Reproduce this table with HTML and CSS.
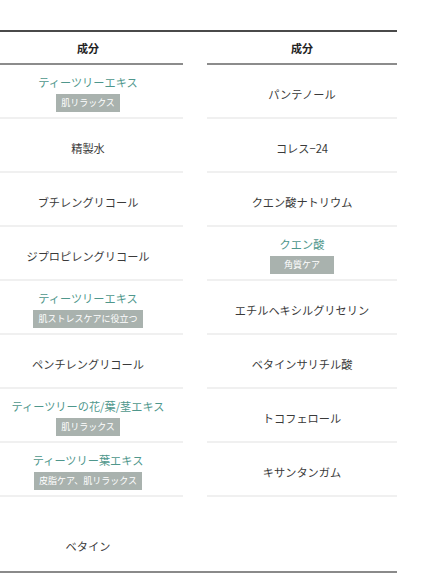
FILE: index.html
```html
<!DOCTYPE html>
<html lang="ja">
<head>
<meta charset="utf-8">
<link rel="stylesheet" href="styles.css">
</head>
<body>
<div class="compare">
  <div class="col">
    <div class="head">成分</div>
    <div class="row"><span class="name hl">ティーツリーエキス</span><span class="tag">肌リラックス</span></div>
    <div class="row single"><span class="name">精製水</span></div>
    <div class="row single"><span class="name">ブチレングリコール</span></div>
    <div class="row single"><span class="name">ジプロピレングリコール</span></div>
    <div class="row"><span class="name hl">ティーツリーエキス</span><span class="tag">肌ストレスケアに役立つ</span></div>
    <div class="row single"><span class="name">ペンチレングリコール</span></div>
    <div class="row"><span class="name hl">ティーツリーの花/葉/茎エキス</span><span class="tag">肌リラックス</span></div>
    <div class="row"><span class="name hl">ティーツリー葉エキス</span><span class="tag">皮脂ケア、肌リラックス</span></div>
    <div class="row last"><span class="name">ベタイン</span></div>
  </div>
  <div class="col">
    <div class="head">成分</div>
    <div class="row single"><span class="name">パンテノール</span></div>
    <div class="row single"><span class="name">コレス−24</span></div>
    <div class="row single"><span class="name">クエン酸ナトリウム</span></div>
    <div class="row"><span class="name hl">クエン酸</span><span class="tag">角質ケア</span></div>
    <div class="row single"><span class="name">エチルヘキシルグリセリン</span></div>
    <div class="row single"><span class="name">ベタインサリチル酸</span></div>
    <div class="row single"><span class="name">トコフェロール</span></div>
    <div class="row single"><span class="name">キサンタンガム</span></div>
    <div class="row last"></div>
  </div>
</div>
</body>
</html>
```

FILE: styles.css
```css
* { box-sizing: border-box; }
html, body { margin: 0; padding: 0; background: #fff; }
body {
  padding-top: 30px;
  font-family: "Noto Sans CJK JP", "Noto Sans", sans-serif;
  color: #333;
  overflow: hidden;
}
.compare {
  display: grid;
  grid-template-columns: 190px 190px;
  column-gap: 24px;
  width: 404px;
  margin-left: -7px;
  border-top: 2px solid #4a4a4a;
  border-bottom: 2px solid #8a8a8a;
}
.col { display: flex; flex-direction: column; }
.head {
  height: 33px;
  display: flex;
  align-items: center;
  justify-content: center;
  font-size: 11px;
  font-weight: 700;
  color: #222;
  border-bottom: 2px solid #8c8c8c;
}
.row {
  height: 54px;
  display: flex;
  flex-direction: column;
  align-items: center;
  justify-content: center;
  gap: 3px;
  padding-top: 3px;
  border-bottom: 2px solid #f0f0f0;
}
.row.single { padding-top: 7px; }
.row.last {
  height: 74px;
  padding-top: 24px;
  border-bottom: none;
}
.name {
  font-size: 11.2px;
  line-height: 17px;
  color: #3a3a3a;
}
.name.hl { color: #4f978c; }
.tag {
  min-width: 64px;
  height: 18px;
  padding: 0 5px;
  display: flex;
  align-items: center;
  justify-content: center;
  background: #a9b2ae;
  color: #fff;
  font-size: 9px;
  line-height: 18px;
}
```
